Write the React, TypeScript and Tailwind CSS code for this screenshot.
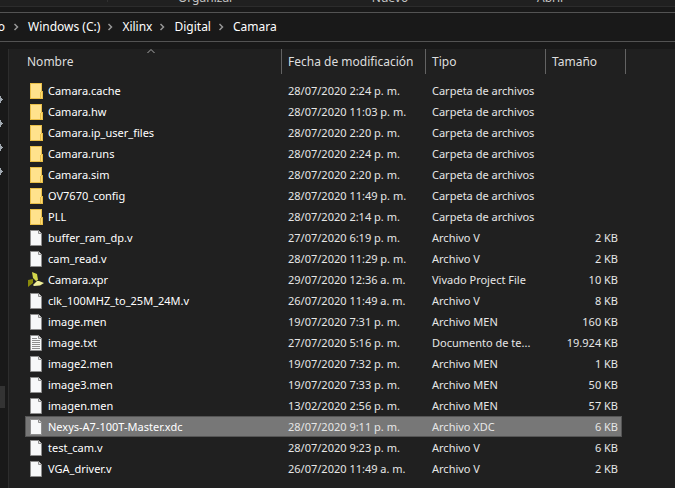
import React from "react";

type Kind = "folder" | "file" | "text" | "vivado";

interface Entry {
  name: string;
  date: string;
  type: string;
  size?: string;
  kind: Kind;
  selected?: boolean;
}

const entries: Entry[] = [
  { name: "Camara.cache", date: "28/07/2020 2:24 p. m.", type: "Carpeta de archivos", kind: "folder" },
  { name: "Camara.hw", date: "28/07/2020 11:03 p. m.", type: "Carpeta de archivos", kind: "folder" },
  { name: "Camara.ip_user_files", date: "28/07/2020 2:20 p. m.", type: "Carpeta de archivos", kind: "folder" },
  { name: "Camara.runs", date: "28/07/2020 2:24 p. m.", type: "Carpeta de archivos", kind: "folder" },
  { name: "Camara.sim", date: "28/07/2020 2:20 p. m.", type: "Carpeta de archivos", kind: "folder" },
  { name: "OV7670_config", date: "28/07/2020 11:49 p. m.", type: "Carpeta de archivos", kind: "folder" },
  { name: "PLL", date: "28/07/2020 2:14 p. m.", type: "Carpeta de archivos", kind: "folder" },
  { name: "buffer_ram_dp.v", date: "27/07/2020 6:19 p. m.", type: "Archivo V", size: "2 KB", kind: "file" },
  { name: "cam_read.v", date: "28/07/2020 11:29 p. m.", type: "Archivo V", size: "2 KB", kind: "file" },
  { name: "Camara.xpr", date: "29/07/2020 12:36 a. m.", type: "Vivado Project File", size: "10 KB", kind: "vivado" },
  { name: "clk_100MHZ_to_25M_24M.v", date: "26/07/2020 11:49 a. m.", type: "Archivo V", size: "8 KB", kind: "file" },
  { name: "image.men", date: "19/07/2020 7:31 p. m.", type: "Archivo MEN", size: "160 KB", kind: "file" },
  { name: "image.txt", date: "27/07/2020 5:16 p. m.", type: "Documento de te...", size: "19.924 KB", kind: "text" },
  { name: "image2.men", date: "19/07/2020 7:32 p. m.", type: "Archivo MEN", size: "1 KB", kind: "file" },
  { name: "image3.men", date: "19/07/2020 7:33 p. m.", type: "Archivo MEN", size: "50 KB", kind: "file" },
  { name: "imagen.men", date: "13/02/2020 2:56 p. m.", type: "Archivo MEN", size: "57 KB", kind: "file" },
  { name: "Nexys-A7-100T-Master.xdc", date: "28/07/2020 9:11 p. m.", type: "Archivo XDC", size: "6 KB", kind: "file", selected: true },
  { name: "test_cam.v", date: "28/07/2020 9:23 p. m.", type: "Archivo V", size: "6 KB", kind: "file" },
  { name: "VGA_driver.v", date: "26/07/2020 11:49 a. m.", type: "Archivo V", size: "2 KB", kind: "file" },
];

const crumbs = ["Windows (C:)", "Xilinx", "Digital", "Camara"];

function FileIcon({ kind }: { kind: Kind }) {
  if (kind === "folder") {
    return (
      <svg className="h-4 w-4 shrink-0" viewBox="0 0 16 16" aria-hidden="true">
        <path d="M2 0h12v8h1v8H2z" fill="#e9bf48" />
        <path d="M3 1h10v8h-1v6H3z" fill="#ffe28c" />
        <path d="M13 9h1v6h-1z" fill="#ffdb73" />
      </svg>
    );
  }
  if (kind === "vivado") {
    return (
      <svg className="h-4 w-4 shrink-0" viewBox="0 0 16 16" aria-hidden="true">
        <path d="M4 0l5 2 1 6-2 1-3-3z" fill="#d3d74b" />
        <path d="M0 8l5-1v4l-5 4z" fill="#8b8b0b" />
        <path d="M5 13l4-4h2l5 2-4 2.500-6 .5z" fill="#efee9a" />
      </svg>
    );
  }
  return (
    <svg className="h-4 w-4 shrink-0" viewBox="0 0 16 16" aria-hidden="true">
      <path d="M2.500.5h8l3 3v12h-11z" fill="#f7f8f9" stroke="#8e8e8e" />
      <path d="M10.500.5v3h3" fill="#e4e4e4" stroke="#8e8e8e" />
      {kind === "text" && (
        <path d="M4 3.500h5M4 5.500h8M4 7.500h8M4 9.500h8M4 11.500h8M4 13.500h8" stroke="#8d8d8d" />
      )}
    </svg>
  );
}

function Chevron() {
  return (
    <svg className="h-2 w-2 shrink-0" viewBox="0 0 8 8" fill="none" aria-hidden="true">
      <path d="M2.500 1l3 3-3 3" stroke="#969696" strokeWidth="1.500" />
    </svg>
  );
}

function Ribbon() {
  return (
    <header className="flex h-[7px] items-end overflow-hidden border-b border-[#2c2c2c] bg-[#202020] leading-4 text-[#c4c4c4]">
      <div className="mb-1 h-1 w-[108px] shrink-0 border-r border-[#303030]" />
      <div className="flex w-[196px] shrink-0 justify-center">Organizar</div>
      <div className="flex w-[172px] shrink-0 justify-center">Nuevo</div>
      <div className="flex w-[150px] shrink-0 justify-center">Abrir</div>
    </header>
  );
}

function PinnedItems() {
  return (
    <aside className="w-[9px] shrink-0 overflow-hidden border-r border-[#2d2d2d] bg-[#191919]">
      <div className="flex flex-col gap-[17px] pt-[47px]">
        {[0, 1, 2, 3].map((n) => (
          <svg key={n} className="h-[7px] w-1" viewBox="0 0 4 7" aria-hidden="true">
            <path d="M0 0h1v2h1v1h1v1H2v1H1v2H0z" fill="#a2aab2" />
          </svg>
        ))}
      </div>
      <div className="mt-[211px] h-[22px] w-[5px] bg-[#333333]" />
    </aside>
  );
}

function FileTable() {
  return (
    <table className="w-[601px] table-fixed border-separate border-spacing-0 text-left">
      <colgroup>
        <col className="w-[257px]" />
        <col className="w-[144px]" />
        <col className="w-[120px]" />
        <col className="w-[76px]" />
        <col className="w-1" />
      </colgroup>
      <thead>
        <tr className="h-[25px] text-[#dedede]">
          <th scope="col" aria-sort="ascending" className="relative border-r border-[#636363] p-0 pl-0.5 font-normal">
            Nombre
            <svg className="absolute left-[122px] top-0 h-1 w-2" viewBox="0 0 8 4" fill="none" aria-hidden="true">
              <path d="M.5 4l3.500-3.500L7.500 4" stroke="#a8a8a8" />
            </svg>
          </th>
          <th scope="col" className="border-r border-[#636363] p-0 pl-1.5 font-normal">Fecha de modificación</th>
          <th scope="col" className="border-r border-[#636363] p-0 pl-1.5 font-normal">Tipo</th>
          <th scope="col" colSpan={2} className="border-r border-[#636363] p-0 pl-1.5 font-normal">Tamaño</th>
        </tr>
      </thead>
      <tbody className="before:block before:h-1.5">
        {entries.map((e) => {
          const edge = e.selected ? "border-y border-[#555555] bg-[#777777]" : "border-y border-transparent";
          return (
            <tr key={e.name} aria-selected={e.selected} className="h-[21px] whitespace-nowrap text-[11px] text-[#e6e6e6]">
              <td className={`${edge} border-l p-0 pl-0.5 text-white`}>
                <div className="flex items-center gap-1">
                  <FileIcon kind={e.kind} />
                  {e.name}
                </div>
              </td>
              <td className={`${edge} p-0 pl-1.5`}>{e.date}</td>
              <td className={`${edge} p-0 pl-1.5`}>{e.type}</td>
              <td className={`${edge} border-r p-0 pr-[3px] text-right`}>{e.size}</td>
              <td className="p-0" />
            </tr>
          );
        })}
      </tbody>
    </table>
  );
}

export default function App() {
  return (
    <div className="flex min-h-screen flex-col overflow-hidden bg-[#191919] font-['Segoe_UI','Noto_Sans',sans-serif] text-[12px] leading-4">
      <Ribbon />
      <nav aria-label="Ruta" className="mt-[5px] flex h-[30px] items-center overflow-hidden border-y border-[#535353] text-white">
        <span className="flex w-[5px] shrink-0 justify-end">o</span>
        <span className="w-[7px] shrink-0" />
        {crumbs.map((c) => (
          <React.Fragment key={c}>
            <Chevron />
            <a href="#" className="ml-2 mr-1.5 whitespace-nowrap">{c}</a>
          </React.Fragment>
        ))}
      </nav>
      <main className="mt-[7px] flex grow">
        <PinnedItems />
        <section className="grow bg-[#202020] pl-4">
          <FileTable />
        </section>
      </main>
    </div>
  );
}
